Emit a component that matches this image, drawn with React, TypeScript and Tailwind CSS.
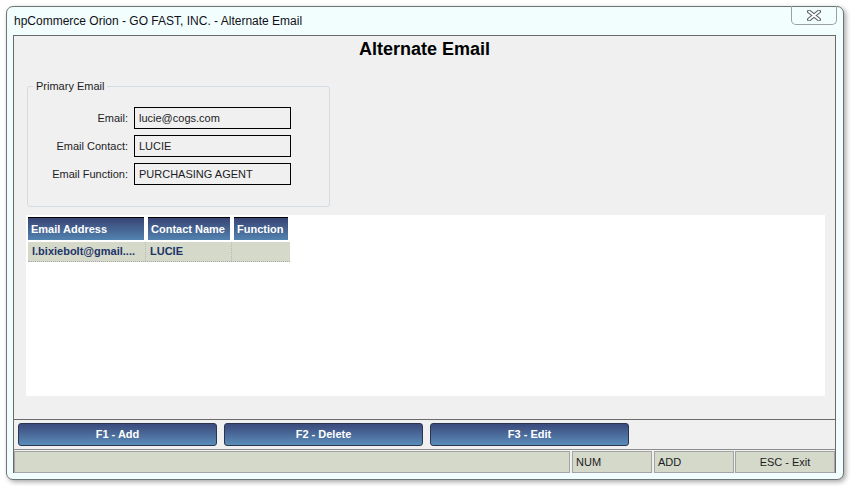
import React from "react";

const rows = [
    { label: "Email:", value: "lucie@cogs.com" },
    { label: "Email Contact:", value: "LUCIE" },
    { label: "Email Function:", value: "PURCHASING AGENT" },
];

const buttons = ["F1 - Add", "F2 - Delete", "F3 - Edit"];

function CloseGlyph() {
    return (
        <svg width="14" height="11" viewBox="0 0 14 11">
            <path d="M2 1.5 L12 9.5 M12 1.5 L2 9.5" stroke="#5d6168" strokeWidth="4" strokeLinecap="round" fill="none" />
            <path d="M2 1.5 L12 9.5 M12 1.5 L2 9.5" stroke="#ffffff" strokeWidth="1.8" strokeLinecap="round" fill="none" />
        </svg>
    );
}

export default function App() {
    return (
        <div className="w-[851px] h-[486px] bg-white pl-[6px] pt-[6px] font-['Liberation_Sans',Arial,sans-serif] text-[11px] text-[#1c1c24]">
            <div className="w-[838px] h-[474px] rounded-[7px] border border-[#6f7474] bg-[#f2fefe] shadow-[2px_2px_5px_rgba(0,0,0,0.35)] flex flex-col">
                {/* title bar */}
                <div className="h-[28px] flex justify-between items-start">
                    <div className="pl-[7px] pt-[6px] text-[12px] leading-[16px] text-[#101018]">
                        hpCommerce Orion - GO FAST, INC. - Alternate Email
                    </div>
                    <button className="mt-[-1px] mr-[6px] w-[46px] h-[19px] border border-t-0 border-[#9aa0a4] rounded-b-[5px] flex items-center justify-center pt-[1px]">
                        <CloseGlyph />
                    </button>
                </div>

                {/* client */}
                <div className="flex-1 ml-[6px] mr-[7px] mb-[6px] border-t border-x border-[#6a6a6a] bg-[#f0f0f0] flex flex-col">
                    <div className="flex-1 flex flex-col">
                        <div className="h-[26px] leading-[26px] text-center text-[18px] font-bold text-black">Alternate Email</div>

                        <fieldset className="ml-[13px] mt-[18px] w-[303px] border border-[#d3dce4] rounded-[3px] pt-[14px] pb-[21px] px-0">
                            <legend className="ml-[5px] px-[3px] leading-[13px]">Primary Email</legend>
                            <div className="flex flex-col gap-[6px]">
                                {rows.map((r) => (
                                    <div key={r.label} className="flex items-center gap-[6px] h-[22px]">
                                        <div className="w-[100px] text-right">{r.label}</div>
                                        <div className="w-[157px] h-[22px] border border-black pl-[4px] leading-[20px]">{r.value}</div>
                                    </div>
                                ))}
                            </div>
                        </fieldset>

                        <div className="mt-[8px] ml-[12px] w-[799px] h-[181px] bg-white pl-[2px] pt-[2px]">
                            <div className="flex gap-[4px] text-white font-bold">
                                <div className="w-[116px] h-[23px] border-t border-black bg-gradient-to-b from-[#384575] to-[#5283b0] pl-[3px] leading-[22px]">Email Address</div>
                                <div className="w-[82px] h-[23px] border-t border-black bg-gradient-to-b from-[#384575] to-[#5283b0] pl-[3px] leading-[22px]">Contact Name</div>
                                <div className="w-[54px] h-[23px] border-t border-black bg-gradient-to-b from-[#384575] to-[#5283b0] pl-[3px] leading-[22px]">Function</div>
                            </div>
                            <div className="mt-[2px] flex w-[262px] h-[20px] bg-[#d4d9ca] border-b border-dotted border-[#a8a8a8] font-bold text-[#1d3468] leading-[19px]">
                                <div className="w-[118px] pl-[4px] border-r border-dotted border-[#b8b8b8] truncate">l.bixiebolt@gmail....</div>
                                <div className="w-[86px] pl-[4px] border-r border-dotted border-[#b8b8b8]">LUCIE</div>
                                <div className="flex-1"></div>
                            </div>
                        </div>
                    </div>

                    {/* toolbar */}
                    <div className="h-[31px] border-y border-t-[#6b6b6b] border-b-[#8c8c8c] pt-[3px] pl-[4px] flex gap-[7px]">
                        {buttons.map((b) => (
                            <button key={b} className="w-[199px] h-[23px] rounded-[3px] border border-[#2b3550] bg-gradient-to-b from-[#3b4a7c] to-[#5a8db9] text-white font-bold text-[11px] leading-[21px] text-center">
                                {b}
                            </button>
                        ))}
                    </div>

                    {/* status bar */}
                    <div className="mt-[1px] h-[22px] flex">
                        <div className="flex-1 border border-[#a4a4a4] bg-[#d4d9ca]"></div>
                        <div className="ml-[2px] w-[80px] border border-[#a4a4a4] bg-[#d4d9ca] pl-[3px] leading-[20px]">NUM</div>
                        <div className="ml-[2px] w-[80px] border border-[#a4a4a4] bg-[#d4d9ca] pl-[3px] leading-[20px]">ADD</div>
                        <div className="ml-[1px] w-[100px] border border-[#a4a4a4] bg-[#d4d9ca] text-center leading-[20px]">ESC - Exit</div>
                    </div>
                </div>
            </div>
        </div>
    );
}
